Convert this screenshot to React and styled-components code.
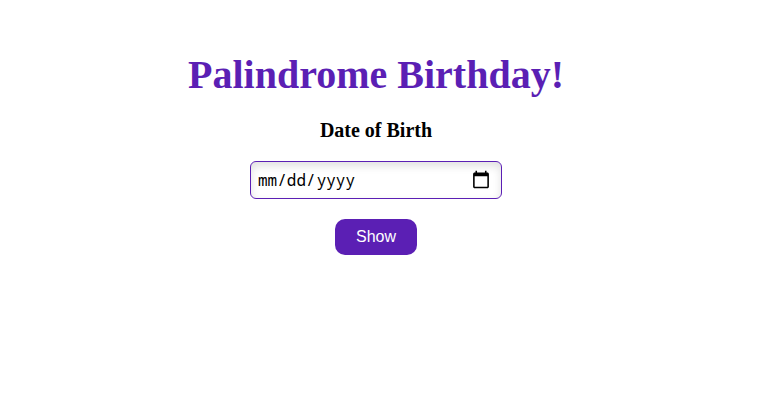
import React from "react";
import styled, { createGlobalStyle } from "styled-components";

const GlobalStyle = createGlobalStyle`
  * { box-sizing: border-box; }
  body {
    margin: 0;
    background: #ffffff;
    font-family: "Liberation Serif", "Times New Roman", serif;
  }
`;

const Page = styled.main`
  display: flex;
  flex-direction: column;
  align-items: center;
  padding: 49px 18px 24px 8px;
`;

const Title = styled.h1`
  margin: 0;
  color: #5b1fb4;
  font-size: 40px;
  line-height: 52px;
  text-align: center;
`;

const BirthdayForm = styled.form`
  display: flex;
  flex-direction: column;
  align-items: center;
  gap: 20px;
  margin-top: 18px;
`;

const DateLabel = styled.label`
  color: #000000;
  font-size: 20px;
  font-weight: bold;
  line-height: 22px;
`;

const DateInput = styled.input`
  width: 252px;
  height: 38px;
  padding: 4px 10px 4px 7px;
  border: 1px solid #5b1fb4;
  border-radius: 6px;
  background: #ffffff;
  box-shadow: inset 0 4px 8px #e0e0e0;
  color: #000000;
  font-family: "Noto Sans Mono", "Liberation Mono", monospace;
  font-size: 16px;

  &::-webkit-datetime-edit-month-field,
  &::-webkit-datetime-edit-day-field {
    padding: 0;
  }

  &::-webkit-datetime-edit-year-field {
    padding: 0 0 0 1px;
  }

  &::-webkit-calendar-picker-indicator {
    width: 20px;
    height: 20px;
    padding: 0;
  }
`;

const ShowButton = styled.button`
  height: 36px;
  padding: 0 21px;
  border: none;
  border-radius: 10px;
  background: #5b1fb4;
  color: #ffffff;
  font-family: "Liberation Sans", Arial, sans-serif;
  font-size: 16px;
  cursor: pointer;
`;

export default function App() {
  return (
    <>
      <GlobalStyle />
      <Page>
        <Title>Palindrome Birthday!</Title>
        <BirthdayForm onSubmit={(event) => event.preventDefault()}>
          <DateLabel htmlFor="birth-date">Date of Birth</DateLabel>
          <DateInput id="birth-date" type="date" />
          <ShowButton type="submit">Show</ShowButton>
        </BirthdayForm>
      </Page>
    </>
  );
}
